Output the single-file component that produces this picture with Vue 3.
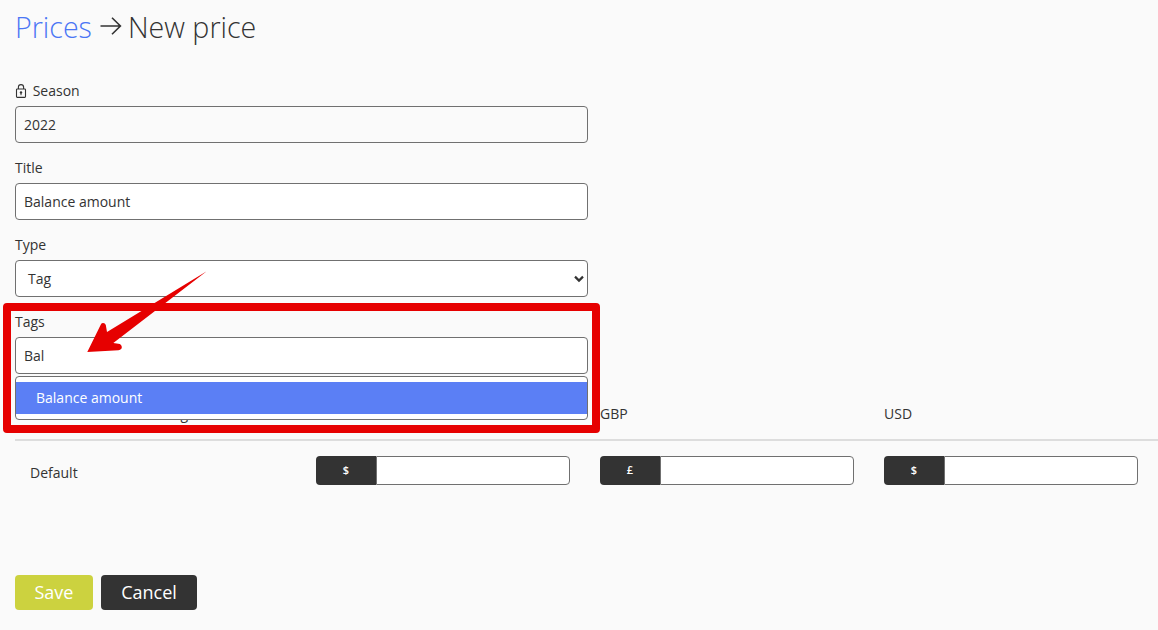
<template>
  <div class="page">
    <h1 class="heading">
      <a class="crumb">Prices</a>
      <svg class="sep" width="22" height="20" viewBox="0 0 22 20">
        <path d="M0.5 10h20M12 1.8l8.4 8.2-8.4 8.2" fill="none" stroke="#333" stroke-width="1.6" />
      </svg>
      <span>New price</span>
    </h1>

    <div class="form">
      <div class="field">
        <label>
          <svg class="lock" width="12" height="14" viewBox="0 0 12 14">
            <path d="M3.4 5V3.2a2.6 2.6 0 0 1 5.2 0V5" fill="none" stroke="#333" stroke-width="1.1" />
            <rect x="1.5" y="5" width="9" height="8.4" rx="0.8" fill="none" stroke="#333" stroke-width="1.1" />
            <circle cx="6" cy="8.4" r="1.2" fill="#333" />
            <path d="M6 8.8v2.4" stroke="#333" stroke-width="1" />
          </svg>
          Season
        </label>
        <input class="control muted" value="2022" readonly />
      </div>
      <div class="field">
        <label>Title</label>
        <input class="control" value="Balance amount" readonly />
      </div>
      <div class="field">
        <label>Type</label>
        <div class="select control">
          <span>Tag</span>
          <svg width="10" height="8" viewBox="0 0 10 8">
            <path d="M1 1.6 5 5.6l4-4" fill="none" stroke="#333" stroke-width="2.2" />
          </svg>
        </div>
      </div>
      <div class="field tags">
        <label>Tags</label>
        <input class="control" value="Bal" readonly />
        <div class="dropdown">
          <div class="option">Balance amount</div>
        </div>
      </div>
    </div>

    <div class="price-head">
      <div class="first">Rates for all the booking</div>
      <div v-for="c in currencies" :key="c.code">{{ c.code }}</div>
    </div>
    <div class="price-row">
      <div class="first default">Default</div>
      <div v-for="c in currencies" :key="c.code" class="group">
        <span class="prefix">{{ c.symbol }}</span>
        <input class="amount" />
      </div>
    </div>

    <div class="actions">
      <button class="save">Save</button>
      <button class="cancel">Cancel</button>
    </div>

    <div class="highlight"></div>
    <svg class="arrow" width="140" height="100" viewBox="80 265 140 100">
      <path d="M206.7 271.3 107 332 105.8 325Q105 322.8 102.8 323 101.2 323.2 100.6 325L87.3 352 118.5 350.3Q122 349.6 121.8 347 121.5 344 118.3 343.7L113.3 343Z" fill="#e60000" />
    </svg>
  </div>
</template>

<script setup>
const currencies = [
  { code: 'EUR', symbol: '$' },
  { code: 'GBP', symbol: '£' },
  { code: 'USD', symbol: '$' }
]
</script>

<style>
html, body {
  background: #fafafa;
}
</style>

<style scoped>
.page {
  position: relative;
  height: 630px;
  padding-left: 15px;
  box-sizing: border-box;
  overflow: hidden;
  background: #fafafa;
  color: #333;
  font-family: "Open Sans", sans-serif;
  font-size: 14px;
}

.heading {
  display: flex;
  align-items: center;
  gap: 8px;
  margin: 0 0 29px;
  height: 52px;
  font-size: 28.6px;
  font-weight: 300;
}

.crumb {
  color: #4a76f5;
}

.sep {
  flex: none;
  margin-right: -2px;
}

.form {
  width: 573px;
}

.field {
  position: relative;
  margin-bottom: 15px;
}

label {
  display: block;
  height: 20px;
  line-height: 20px;
  margin-bottom: 5px;
}

.lock {
  vertical-align: -2px;
  margin-right: 2px;
}

.control {
  display: block;
  width: 100%;
  height: 37px;
  box-sizing: border-box;
  padding: 0 8px;
  border: 1px solid #707070;
  border-radius: 4px;
  background: #fff;
  color: #333;
  font: inherit;
  outline: none;
}

.muted {
  background: #fafafa;
}

.select {
  display: flex;
  align-items: center;
  justify-content: space-between;
  padding: 0 3px 0 12px;
}

.tags {
  margin-bottom: 0;
}

.dropdown {
  position: absolute;
  z-index: 2;
  top: 64px;
  left: 0;
  right: 0;
  height: 44px;
  box-sizing: border-box;
  padding-top: 5px;
  border: 1px solid #707070;
  border-radius: 4px;
  background: #fff;
}

.option {
  height: 32px;
  line-height: 32px;
  padding-left: 20px;
  background: #5b7ff5;
  color: #fff;
}

.price-head,
.price-row {
  display: grid;
  grid-template-columns: 301px 284px 284px 1fr;
}

.first {
  padding-left: 15px;
}

.price-head {
  align-items: center;
  height: 67px;
  padding-top: 13px;
  box-sizing: border-box;
  border-bottom: 2px solid #ddd;
}

.price-row {
  align-items: center;
  padding-top: 15px;
}

.default {
  padding-top: 3px;
}

.group {
  display: flex;
  width: 254px;
  height: 29px;
}

.prefix {
  flex: none;
  width: 60px;
  line-height: 27px;
  border-radius: 4px 0 0 4px;
  background: #333;
  color: #fff;
  font-size: 11px;
  font-weight: 600;
  text-align: center;
}

.amount {
  flex: 1;
  min-width: 0;
  box-sizing: border-box;
  border: 1px solid #707070;
  border-radius: 0 4px 4px 0;
  background: #fff;
  outline: none;
}

.actions {
  display: flex;
  gap: 8px;
  margin-top: 90px;
}

button {
  height: 35px;
  padding: 0 0 2px;
  border: 0;
  border-radius: 4px;
  color: #fff;
  font-family: inherit;
  font-size: 18px;
}

.save {
  width: 78px;
  background: #ccd23f;
}

.cancel {
  width: 96px;
  background: #333;
}

.highlight {
  position: absolute;
  z-index: 3;
  left: 3px;
  top: 303px;
  width: 597px;
  height: 130px;
  box-sizing: border-box;
  border: 8px solid #e60000;
  border-radius: 4px;
  pointer-events: none;
}

.arrow {
  position: absolute;
  z-index: 4;
  left: 80px;
  top: 265px;
}
</style>
